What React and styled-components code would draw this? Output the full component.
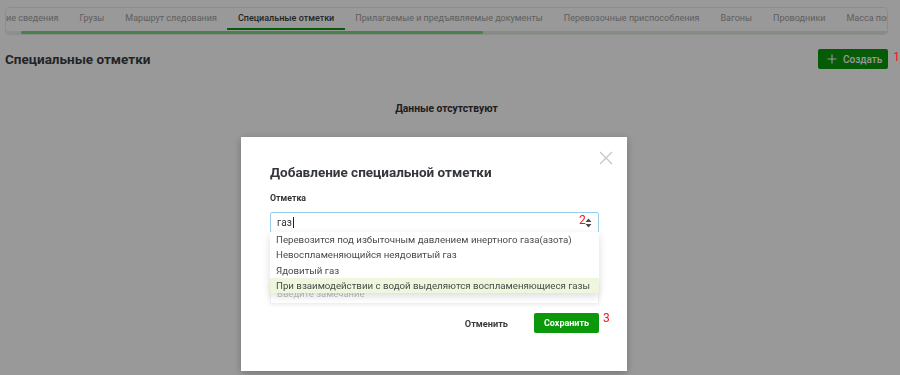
import React, { useLayoutEffect, useRef } from 'react';
import styled, { createGlobalStyle } from 'styled-components';

const GlobalStyle = createGlobalStyle`
  html, body {
    margin: 0;
    padding: 0;
    background: #fff;
    font-family: Roboto, "Liberation Sans", Arial, sans-serif;
    overflow: hidden;
  }
`;

const Page = styled.div`
  width: 900px;
  height: 375px;
  padding: 7px 12px 0 5px;
  box-sizing: border-box;
`;

const TabsBox = styled.div`
  border: 1px solid #ececec;
  border-radius: 4px;
  overflow: hidden;
`;

const TabsScroll = styled.div`
  overflow: hidden;
`;

const TabsRow = styled.div`
  display: flex;
  white-space: nowrap;
`;

const Tab = styled.div`
  padding: 0 10.5px;
  height: 20px;
  line-height: 21px;
  font-size: 9px;
  color: ${({ active }) => (active ? '#3c3c3c' : '#9e9e9e')};
  font-weight: ${({ active }) => (active ? 500 : 400)};
  border-bottom: 2px solid ${({ active }) => (active ? '#0b990b' : 'transparent')};
  flex-shrink: 0;
`;

const ScrollTrack = styled.div`
  display: flex;
  height: 3px;
  margin-top: 1px;
  background: #dde9dd;
`;

const ScrollStart = styled.div`
  width: 15px;
  background: #eeeeee;
`;

const ScrollThumb = styled.div`
  width: 462px;
  background: #7cd67c;
  border-radius: 2px;
`;

const HeaderRow = styled.div`
  display: flex;
  align-items: center;
  justify-content: space-between;
  margin-top: 14px;
`;

const Heading = styled.h2`
  margin: 0;
  font-size: 13.5px;
  font-weight: 700;
  color: #3a3d42;
`;

const CreateButton = styled.button`
  position: relative;
  display: flex;
  align-items: center;
  gap: 6px;
  height: 20px;
  width: 70px;
  padding: 0 0 0 9px;
  border: none;
  border-radius: 2px;
  background: #0b990b;
  color: #fff;
  font-family: inherit;
  font-size: 10px;
  font-weight: 500;
`;

const Mark = styled.span`
  position: absolute;
  z-index: 20;
  color: #f01818;
  font-size: 12px;
  font-family: Roboto, sans-serif;
  font-weight: 400;
  line-height: 12px;
  left: ${({ left }) => left}px;
  top: ${({ top }) => top}px;
`;

const Empty = styled.div`
  margin-top: 33px;
  text-align: center;
  font-size: 10.3px;
  line-height: 14px;
  font-weight: 700;
  color: #333;
`;

const Overlay = styled.div`
  position: fixed;
  inset: 0;
  z-index: 10;
  background: rgba(0, 0, 0, 0.4);
  display: flex;
  justify-content: center;
  align-items: flex-start;
  padding: 137px 32px 0 0;
`;

const Modal = styled.div`
  position: relative;
  width: 386px;
  height: 234px;
  box-sizing: border-box;
  padding: 26px 28px 0 29px;
  background: #fff;
  box-shadow: 0 2px 8px rgba(0, 0, 0, 0.25);
  display: flex;
  flex-direction: column;
`;

const CloseButton = styled.button`
  position: absolute;
  top: 14px;
  right: 14px;
  width: 14px;
  height: 14px;
  padding: 0;
  border: none;
  background: none;
`;

const Title = styled.h3`
  margin: 0;
  font-size: 13.5px;
  font-weight: 700;
  color: #33363a;
  line-height: 18px;
`;

const Field = styled.div`
  position: relative;
  display: flex;
  flex-direction: column;
  margin-top: ${({ gap }) => gap}px;
`;

const Label = styled.label`
  font-size: 8.8px;
  font-weight: 700;
  color: #333;
  line-height: 12px;
  margin-bottom: 8px;
`;

const SelectBox = styled.div`
  position: relative;
  display: flex;
  align-items: center;
  height: 21px;
  box-sizing: border-box;
  border: 1px solid #9bcdee;
  border-radius: 2px;
  padding: 0 6px;
  font-size: 10px;
  color: #333;
`;

const Caret = styled.span`
  display: inline-block;
  width: 1px;
  height: 11px;
  background: #222;
  margin-left: 1px;
`;

const Arrows = styled.svg`
  margin-left: auto;
`;

const Dropdown = styled.ul`
  position: absolute;
  z-index: 5;
  top: 40px;
  left: 0;
  right: 0;
  margin: 0;
  padding: 0;
  list-style: none;
  background: #fff;
  box-shadow: 0 3px 8px rgba(0, 0, 0, 0.14);
`;

const Option = styled.li`
  height: 15.3px;
  line-height: 15px;
  padding: 0 6px;
  font-size: 9.7px;
  white-space: nowrap;
  color: #4a4a4a;
  background: ${({ active }) => (active ? '#eef6de' : '#fff')};
`;

const NoteInput = styled.div`
  height: 22px;
  box-sizing: border-box;
  padding: 0 6px;
  display: flex;
  align-items: center;
  font-size: 9.5px;
  color: #bdbdbd;
  border: 1px solid #f0f0f0;
  box-shadow: 0 1px 4px rgba(0, 0, 0, 0.08);
`;

const Footer = styled.div`
  display: flex;
  justify-content: flex-end;
  align-items: center;
  gap: 14px;
  margin-top: 9px;
`;

const TextButton = styled.button`
  height: 20px;
  padding: 0 12px;
  border: none;
  background: none;
  font-family: inherit;
  font-size: 9.2px;
  font-weight: 700;
  color: #3a3a3a;
`;

const SaveButton = styled.button`
  position: relative;
  height: 20px;
  width: 65px;
  padding: 0;
  border: none;
  border-radius: 2px;
  background: #0b990b;
  color: #fff;
  font-family: inherit;
  font-size: 9px;
  font-weight: 700;
`;

const tabs = [
  'Общие сведения',
  'Грузы',
  'Маршрут следования',
  'Специальные отметки',
  'Прилагаемые и предъявляемые документы',
  'Перевозочные приспособления',
  'Вагоны',
  'Проводники',
  'Масса погрузки',
];

const options = [
  'Перевозится под избыточным давлением инертного газа(азота)',
  'Невоспламеняющийся неядовитый газ',
  'Ядовитый газ',
  'При взаимодействии с водой выделяются воспламеняющиеся газы',
];

export default function App() {
  const scrollRef = useRef(null);
  const firstRef = useRef(null);

  useLayoutEffect(() => {
    // tab strip is scrolled so "Грузы" starts near the left edge
    if (scrollRef.current && firstRef.current) {
      scrollRef.current.scrollLeft = firstRef.current.offsetWidth - 63;
    }
  }, []);

  return (
    <>
      <GlobalStyle />
      <Page>
        <TabsBox>
          <TabsScroll ref={scrollRef}>
            <TabsRow>
              {tabs.map((t, i) => (
                <Tab key={t} ref={i === 0 ? firstRef : null} active={i === 3}>
                  {t}
                </Tab>
              ))}
            </TabsRow>
          </TabsScroll>
          <ScrollTrack>
            <ScrollStart />
            <ScrollThumb />
          </ScrollTrack>
        </TabsBox>

        <HeaderRow>
          <Heading>Специальные отметки</Heading>
          <CreateButton>
            <svg width="10" height="10" viewBox="0 0 10 10">
              <path d="M5 0.5v9M0.5 5h9" stroke="#fff" strokeWidth="1.1" fill="none" />
            </svg>
            Создать
            <Mark left={75} top={2}>1</Mark>
          </CreateButton>
        </HeaderRow>

        <Empty>Данные отсутствуют</Empty>
      </Page>

      <Overlay>
        <Modal>
          <CloseButton>
            <svg width="14" height="14" viewBox="0 0 14 14">
              <path d="M1 1l12 12M13 1L1 13" stroke="#c6c6c6" strokeWidth="1.3" fill="none" />
            </svg>
          </CloseButton>
          <Title>Добавление специальной отметки</Title>

          <Field gap={11}>
            <Label>Отметка</Label>
            <SelectBox>
              газ<Caret />
              <Mark left={308} top={1}>2</Mark>
              <Arrows width="7" height="10" viewBox="0 0 7 10">
                <path d="M3.5 0.5L6.5 4H0.5z M3.5 9.5L6.5 6H0.5z" fill="#4a4a4a" />
              </Arrows>
            </SelectBox>
            <Dropdown>
              {options.map((o, i) => (
                <Option key={o} active={i === 3}>{o}</Option>
              ))}
            </Dropdown>
          </Field>

          <Field gap={29}>
            <Label>Замечание</Label>
            <NoteInput>Введите замечание</NoteInput>
          </Field>

          <Footer>
            <TextButton>Отменить</TextButton>
            <SaveButton>
              Сохранить
              <Mark left={69} top={-1}>3</Mark>
            </SaveButton>
          </Footer>
        </Modal>
      </Overlay>
    </>
  );
}
